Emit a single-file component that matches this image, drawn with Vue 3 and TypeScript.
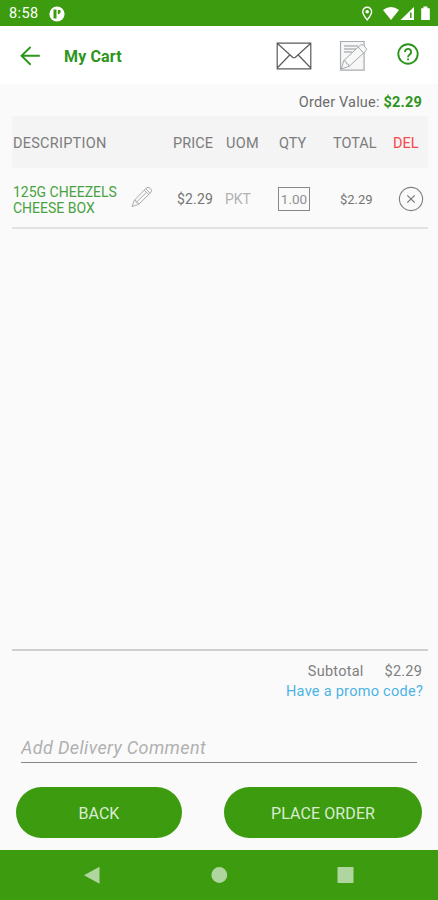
<script setup lang="ts">
import { ref } from 'vue'

interface CartItem {
  name: string
  price: number
  unit: string
  quantity: number
}

const items = ref<CartItem[]>([
  { name: '125G CHEEZELS CHEESE BOX', price: 2.29, unit: 'PKT', quantity: 1 },
])
const money = (value: number): string => '$' + value.toFixed(2)
const total = (): number => items.value.reduce((sum, item) => sum + item.price * item.quantity, 0)
const comment = ref('')
</script>

<template>
  <div class="screen">
    <div class="status">
      <span class="clock">8:58</span>
      <svg class="app-badge" viewBox="0 0 16 16"><circle cx="8" cy="8" r="7.6" fill="#fff" /><path d="M4.5 3.6h3v9h-3zM8.8 3.9h2.7v2.7a2.7 2.7 0 0 1-2.7 1.6z" fill="#3d9b10" /></svg>
      <svg class="signals" viewBox="0 0 72 18">
        <path d="M5.2 2.2a4.4 4.4 0 0 0-4.4 4.4c0 3.3 4.4 8.3 4.4 8.3s4.4-5 4.4-8.3a4.4 4.4 0 0 0-4.4-4.4z" fill="none" stroke="#fff" stroke-width="1.4" />
        <circle cx="5.2" cy="6.8" r="1.8" fill="#fff" />
        <path d="M21 4.9Q29 -.7 37 4.9L29 15z" fill="#fff" />
        <path d="M52 2v13H38.5z" fill="#fff" /><path d="M48.8 7.5v5.4" stroke="#3d9b10" stroke-width="1.5" />
        <path d="M59.2 3.2h2.2V1.6h4v1.6h2.4V15h-8.6z" fill="#fff" />
      </svg>
    </div>

    <header class="toolbar">
      <svg class="back-icon" viewBox="0 0 20 20"><path d="M10.6 1L1.5 9.8l9.1 9M1.8 9.8h18" fill="none" stroke="#2d951c" stroke-width="1.9" /></svg>
      <h1>My Cart</h1>
      <svg class="mail-icon" viewBox="0 0 36 28"><path d="M1.2 1.2h33.6v25.6H1.2zM1.2 1.2L16.3 15q1.7 1.5 3.4 0L34.8 1.2M1.2 26L13.7 13M34.8 26L22.3 13" fill="none" stroke="#5b5b5b" stroke-width="1.2" /></svg>
      <svg class="note-icon" viewBox="0 0 29 32">
        <path d="M1.5 2.5h23.6v28.7H1.5z" fill="#f7f7f7" stroke="#a7acae" stroke-width="1.2" />
        <path d="M5 7h14M5 10h12M5 13h8" stroke="#b3b8ba" stroke-width="1.4" />
        <path d="M2.3 30l2.4-8.4L21.4 6.1q1.5-1.3 3 .2l2.6 2.9q1.2 1.5-.3 2.9L10 27.4zM4.7 21.6q3 0 2.8 3.1 2.5-.2 2.5 2.7M19.3 8.1l5.4 6" fill="#f8f8f8" stroke="#a3a8aa" stroke-width="1" />
      </svg>
      <svg class="help-icon" viewBox="0 0 24 24"><circle cx="12" cy="12" r="9.7" fill="none" stroke="#2d951c" stroke-width="1.9" /><path d="M8.9 10a3.1 3.1 0 1 1 4.9 2.5c-1.1.8-1.8 1.3-1.8 2.7" fill="none" stroke="#2d951c" stroke-width="1.9" /><path d="M11.1 16.4h1.9v1.8h-1.9z" fill="#2d951c" /></svg>
    </header>

    <main>
      <p class="order-value"><span>Order Value:</span><b>{{ money(total()) }}</b></p>

      <div class="grid heading">
        <span class="description">DESCRIPTION</span>
        <span class="price">PRICE</span>
        <span class="uom">UOM</span>
        <span class="qty">QTY</span>
        <span class="total">TOTAL</span>
        <span class="del">DEL</span>
      </div>

      <div v-for="item in items" :key="item.name" class="grid item">
        <span class="name">{{ item.name }}</span>
        <svg class="pencil" viewBox="0 0 22 22"><path d="M1 20.5l2.3-6.2L15 2.3q2-2 3.9-.2l1 1q1.6 1.7-.2 3.5L7.5 18.5zM3.3 14.3l1.6.4.4 1.8 1.8.3.4 1.7M13.2 4.2l4.7 4.5M14.7 2.7l4.6 4.5M6 15.6L15.5 6.4" fill="none" stroke="#a3a3a3" stroke-width=".9" /></svg>
        <span class="price">{{ money(item.price) }}</span>
        <span class="uom">{{ item.unit }}</span>
        <span class="quantity">{{ item.quantity.toFixed(2) }}</span>
        <span class="total">{{ money(item.price * item.quantity) }}</span>
        <button class="remove" aria-label="Remove item"><svg viewBox="0 0 26 26"><circle cx="13" cy="13" r="11.6" fill="none" stroke="#808080" stroke-width="1.1" /><path d="M9.3 9.3l7.4 7.4M16.7 9.3l-7.4 7.4" stroke="#777" stroke-width="1.2" /></svg></button>
      </div>

      <section class="summary">
        <div class="subtotal"><span class="label">Subtotal</span><span class="amount">{{ money(total()) }}</span></div>
        <div class="promo">Have a promo code?</div>
      </section>
      <input v-model="comment" class="comment" placeholder="Add Delivery Comment" />
      <div class="actions">
        <button class="pill back"><span>BACK</span></button>
        <button class="pill order"><span>PLACE ORDER</span></button>
      </div>
    </main>

    <nav class="navbar">
      <svg viewBox="0 0 438 51"><path d="M84 25.2L99.5 16.7v17z" /><circle cx="219.3" cy="25" r="7.9" /><rect x="337.5" y="17" width="16" height="16" rx=".7" /></svg>
    </nav>
  </div>
</template>

<style>
body { background: #fafafa; }
</style>

<style scoped>
* { box-sizing: border-box; }
.screen { width: 100%; height: 900px; display: flex; flex-direction: column; background: #fafafa; color: #757575; font-family: Roboto, sans-serif; font-size: 14.5px; overflow: hidden; }
.status { height: 26px; flex: none; display: flex; align-items: center; padding: 1px 4px 0 9px; background: #3d9b10; color: #fff; }
.clock { width: 40px; font-size: 14.5px; line-height: 18px; letter-spacing: .4px; padding-top: 1px; }
.app-badge { width: 16px; height: 16px; }
.signals { width: 72px; height: 18px; margin-left: auto; }
.toolbar { height: 58px; flex: none; display: flex; align-items: center; padding: 2px 18px 0 20px; background: #fff; color: #2d951c; }
.back-icon { width: 20px; height: 20px; }
h1 { margin: 2px 0 0 24px; font-size: 16px; font-weight: 700; line-height: 20px; letter-spacing: .15px; }
.mail-icon { width: 36px; height: 28px; margin: 0 0 1px auto; }
.note-icon { width: 29px; height: 32px; margin: 0 0 2px 27px; }
.help-icon { width: 24px; height: 24px; margin: 0 0 5px 28px; }
main { flex: 1; min-height: 0; display: flex; flex-direction: column; }
.order-value { height: 32px; flex: none; display: flex; justify-content: flex-end; align-items: center; gap: 4px; margin: 0; padding: 4px 16px 0 0; color: #6c6c6c; letter-spacing: .18px; }
.order-value b { color: #2d951c; font-weight: 700; }
.grid { margin: 0 10px 0 12px; display: grid; grid-template-columns: 119px 42px 52px 53px 55px 60px 1fr; align-items: center; flex: none; }
.heading { height: 52px; padding-top: 2px; background: #f4f4f4; color: #7c7c7c; }
.description { grid-column: 1 / 3; padding-left: 1px; letter-spacing: .25px; }
.heading .price { letter-spacing: .1px; }
.heading .uom { padding-left: 1px; letter-spacing: .3px; }
.heading .qty { padding-left: 1px; }
.del { color: #f5474c; }
.item { height: 61px; padding-top: 2px; border-bottom: 2px solid #e2e2e2; font-size: 14px; }
.name { width: 112px; padding: 2px 0 0 1px; color: #46a340; line-height: 16px; }
.pencil { width: 22px; height: 22px; margin-top: -4px; }
.item .price { padding-left: 4px; padding-top: 1px; letter-spacing: .15px; }
.item .uom { color: #b2b2b2; padding-top: 1px; }
.quantity { width: 32px; height: 24px; border: 1px solid #888; text-align: center; line-height: 23px; font-size: 13.5px; color: #909090; }
.item .total { padding-left: 7px; padding-top: 1px; font-size: 13px; }
.remove { width: 26px; height: 26px; margin-left: 5px; padding: 0; border: 0; background: none; }
.remove svg { display: block; width: 26px; height: 26px; }
.summary { margin: auto 10px 0 12px; padding: 11px 5px 0; height: 80px; flex: none; border-top: 2px solid #cfcfcf; line-height: 20px; }
.subtotal { display: flex; justify-content: flex-end; gap: 21px; padding-right: 1px; color: #808080; }
.label { letter-spacing: .25px; }
.amount { letter-spacing: .2px; }
.promo { text-align: right; color: #4cb4e5; letter-spacing: .27px; }
.comment { flex: none; width: 396px; height: 34px; margin: 0 0 0 21px; padding: 3px 0 0; border: 0; border-bottom: 1px solid #858585; border-radius: 0; background: none; color: #555; font: italic 400 18px Roboto, sans-serif; letter-spacing: .37px; outline: none; }
.comment::placeholder { color: #b0b0b0; opacity: 1; }
.actions { flex: none; height: 87px; display: flex; justify-content: space-between; padding: 24px 16px 12px; }
.pill { height: 51px; padding: 2px 0 0; border: 0; border-radius: 26px; background: #3d9b10; color: #d9ecd0; font: 400 16px Roboto, sans-serif; }
.back { width: 166px; }
.order { width: 198px; letter-spacing: .1px; }
.navbar { flex: none; height: 50px; background: #3d9b10; }
.navbar svg { display: block; width: 438px; height: 51px; fill: #b0d6a0; }
</style>
